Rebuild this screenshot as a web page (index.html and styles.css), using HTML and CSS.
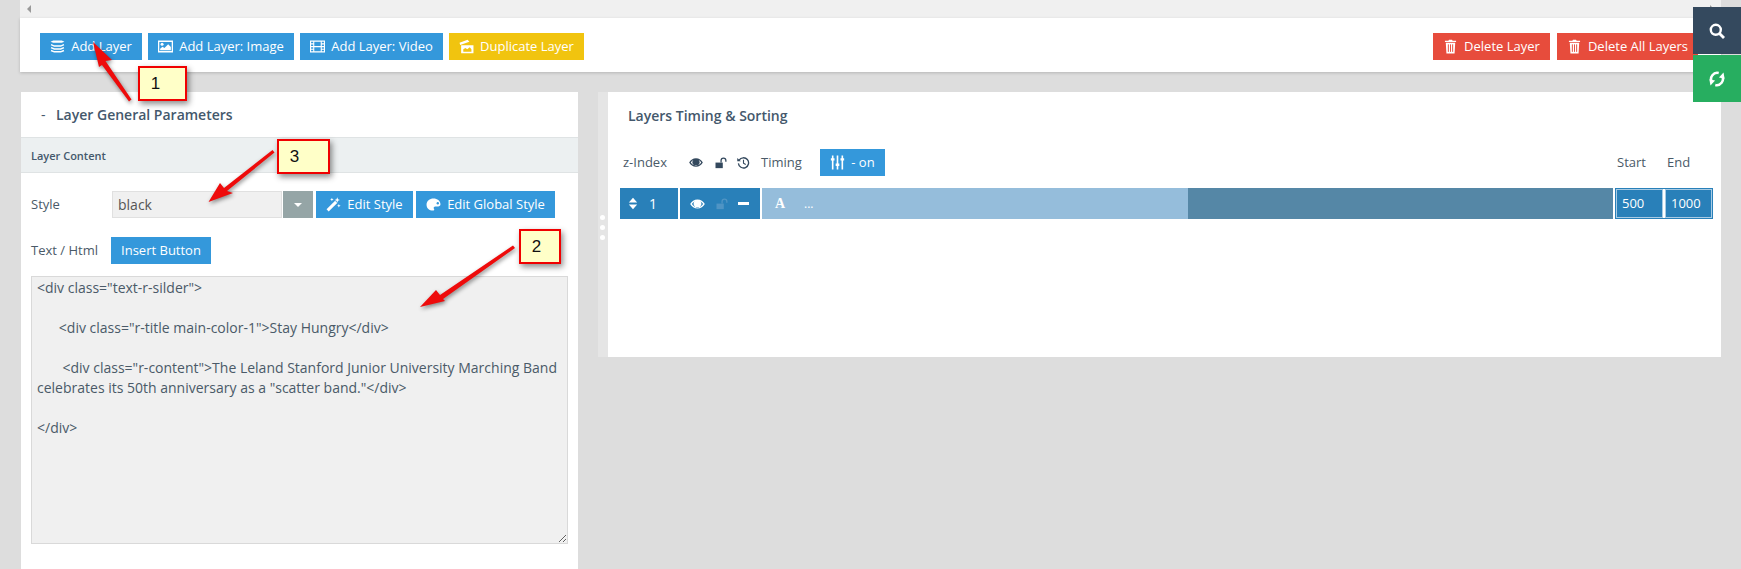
FILE: index.html
```html
<!DOCTYPE html>
<html lang="en">
<head>
<meta charset="utf-8">
<title>Layers</title>
<link rel="stylesheet" href="styles.css">
</head>
<body>
<svg class="defs" width="0" height="0" aria-hidden="true">
  <symbol id="i-layers" viewBox="0 0 14 14"><path d="M.5 2.500 3 1.500h8l2.500 1L11 3.600H3z" fill="currentColor"/><path d="M1 5.300 4 6.600h6l3-1.300M1 8 4 9.300h6l3-1.300M1 10.700 4 12h6l3-1.300" fill="none" stroke="currentColor" stroke-width="1.400"/></symbol>
  <symbol id="i-image" viewBox="0 0 14 14"><path fill-rule="evenodd" d="M0 1.500h14v11H0zM1.200 2.700v8.600h11.600V2.700z" fill="currentColor"/><circle cx="3.800" cy="5" r="1.400" fill="currentColor"/><path d="M2 10.500V9l2.200-1.700L6 8.500 9.500 5l2.500 2.500v3z" fill="currentColor"/></symbol>
  <symbol id="i-film" viewBox="0 0 14 14"><path fill-rule="evenodd" d="M0 1.500h14v11H0zM3 2.600H1V4h2zM3 5.200H1v1.300h2zM3 7.600H1V9h2zM3 10H1v1.400h2zM13 2.600h-2V4h2zM13 5.200h-2v1.300h2zM13 7.600h-2V9h2zM13 10h-2v1.400h2zM10 2.600H4v3.900h6zM10 7.600H4v3.800h6z" fill="currentColor"/></symbol>
  <symbol id="i-dup" viewBox="0 0 14 14"><path d="M.5 3.500 8 .8l1.700 1.800-8.600 3zM2 5.800h11.500v7.400H2z" fill="currentColor"/><path d="M4 12V9.500l2-1.200 1.700 1.200 2.300-1.700 1.600 1.700V12z" fill="#f1c40f"/></symbol>
  <symbol id="i-trash" viewBox="0 0 14 14"><path d="M5 1.600 5.600.6h2.800l.6 1H12.200v1.300H1.800V1.600zM2.600 3.500h8.800l-.6 10H3.200z" fill="currentColor"/><path d="M5 5v7M7 5v7M9 5v7" stroke="#e74c3c" stroke-width=".9"/></symbol>
  <symbol id="i-wand" viewBox="0 0 14 14"><path d="M.5 11.500 8.500 3.500l2 2-8 8z" fill="currentColor"/><path d="M10.500 .3l.7 1.800 1.800.7-1.800.7-.7 1.800-.7-1.800-1.800-.7 1.800-.7zM5.500 .6l.5 1.200 1.200.5-1.200.5-.5 1.200-.5-1.200-1.200-.5 1.200-.5zM12 6.500l.5 1.200 1.200.5-1.200.5-.5 1.200-.5-1.200-1.200-.5 1.200-.5z" fill="currentColor"/></symbol>
  <symbol id="i-palette" viewBox="0 0 14 14"><path d="M7 1.500C3.400 1.500.5 3.900.5 7.200s2.700 5.500 5.800 5.500c1.500 0 1.700-1 1.100-1.800-.7-1 .1-2.100 1.300-2.100h2.600c1.300 0 2.200-.8 2.200-2C13.500 3.700 10.500 1.500 7 1.500z" fill="currentColor"/><circle cx="11" cy="5.800" r="1.100" fill="#3498db"/></symbol>
  <symbol id="i-eye" viewBox="0 0 16 12"><path fill-rule="evenodd" d="M8 1.200C4.600 1.200 1.700 3.200.2 6c1.500 2.800 4.400 4.800 7.800 4.800s6.300-2 7.800-4.800C14.300 3.200 11.400 1.200 8 1.200zM2 6c.8-1.200 1.800-2.200 3-2.900A4 4 0 1 0 11 3.100c1.200.7 2.200 1.700 3 2.900-1.400 2.100-3.500 3.500-6 3.500S3.400 8.100 2 6z" fill="currentColor"/><circle cx="7" cy="4.800" r="1.200" fill="currentColor"/></symbol>
  <symbol id="i-lock" viewBox="0 0 14 14"><path d="M0 6.500h8.500V13H0z" fill="currentColor"/><path d="M6.500 6.500V4a2.800 2.800 0 0 1 5.600 0v1.500" fill="none" stroke="currentColor" stroke-width="1.500"/></symbol>
  <symbol id="i-history" viewBox="0 0 14 14"><path d="M2.300 4.500A5.500 5.500 0 1 1 1.500 8" fill="none" stroke="currentColor" stroke-width="1.400"/><path d="M.3 2.200 4.200 5.700H.3z" fill="currentColor"/><path d="M7 4v3.700l2.400 1.400" fill="none" stroke="currentColor" stroke-width="1.200"/></symbol>
  <symbol id="i-sliders" viewBox="0 0 14 14"><path d="M2.500 .5v13M7 .5v13M11.500 .5v13" stroke="currentColor" stroke-width="1.500"/><path d="M.8 3h3.400v2.200H.8zM5.300 8h3.400v2.200H5.300zM9.800 3h3.400v2.200H9.800z" fill="currentColor"/></symbol>
  <symbol id="i-sort" viewBox="0 0 10 14"><path d="M5 .8 9.500 5.800H.5zM5 13.200.5 8.200h9z" fill="currentColor"/></symbol>
  <symbol id="i-search" viewBox="0 0 16 16"><circle cx="6.800" cy="6.800" r="5" fill="none" stroke="currentColor" stroke-width="2.400"/><path d="M10.500 10.500 15 15" stroke="currentColor" stroke-width="2.800"/></symbol>
  <symbol id="i-refresh" viewBox="0 0 14 14"><path d="M8.500 1.800A5.400 5.400 0 0 0 2.400 9.500" fill="none" stroke="currentColor" stroke-width="2.200"/><path d="M.3 7.300 5.300 8.300 1.300 12.600z" fill="currentColor"/><path d="M5.500 12.200A5.400 5.400 0 0 0 11.600 4.500" fill="none" stroke="currentColor" stroke-width="2.200"/><path d="M13.700 6.700 8.700 5.700 12.700 1.400z" fill="currentColor"/></symbol>
</svg>

<div class="strip"><span class="tri tri-left"></span><span class="tri tri-right"></span></div>

<div class="toolbar">
  <button class="btn btn-blue w-add"><svg class="ic"><use href="#i-layers"/></svg>Add Layer</button>
  <button class="btn btn-blue w-img"><svg class="ic"><use href="#i-image"/></svg>Add Layer: Image</button>
  <button class="btn btn-blue w-vid"><svg class="ic"><use href="#i-film"/></svg>Add Layer: Video</button>
  <button class="btn btn-yellow w-dup"><svg class="ic"><use href="#i-dup"/></svg>Duplicate Layer</button>
  <span class="spacer"></span>
  <button class="btn btn-red w-del"><svg class="ic"><use href="#i-trash"/></svg>Delete Layer</button>
  <button class="btn btn-red w-delall"><svg class="ic"><use href="#i-trash"/></svg>Delete All Layers</button>
</div>

<div class="columns">
  <section class="panel-left">
    <h2 class="panel-head"><span class="dash">-</span>Layer General Parameters</h2>
    <div class="band">Layer Content</div>
    <div class="row-style">
      <label class="lbl lbl-style">Style</label>
      <div class="select">black</div>
      <div class="select-arrow"><span class="caret"></span></div>
      <button class="btn btn-blue w-edit"><svg class="ic"><use href="#i-wand"/></svg>Edit Style</button>
      <button class="btn btn-blue w-global"><svg class="ic"><use href="#i-palette"/></svg>Edit Global Style</button>
    </div>
    <div class="row-text">
      <label class="lbl lbl-text">Text / Html</label>
      <button class="btn btn-blue w-insert">Insert Button</button>
    </div>
    <textarea class="code" spellcheck="false">&lt;div class="text-r-silder"&gt;

      &lt;div class="r-title main-color-1"&gt;Stay Hungry&lt;/div&gt;

       &lt;div class="r-content"&gt;The Leland Stanford Junior University Marching Band celebrates its 50th anniversary as a "scatter band."&lt;/div&gt;

&lt;/div&gt;</textarea>
  </section>

  <div class="divider"><i></i><i></i><i></i></div>

  <section class="panel-right">
    <h2 class="right-title">Layers Timing &amp; Sorting</h2>
    <div class="tl-head">
      <span class="tl-z">z-Index</span>
      <svg class="tl-eye"><use href="#i-eye"/></svg>
      <svg class="tl-lock"><use href="#i-lock"/></svg>
      <svg class="tl-hist"><use href="#i-history"/></svg>
      <span class="tl-timing">Timing</span>
      <button class="btn btn-blue w-on"><svg class="ic"><use href="#i-sliders"/></svg>- on</button>
      <span class="spacer"></span>
      <span class="tl-start">Start</span>
      <span class="tl-end">End</span>
    </div>
    <div class="tl-row">
      <div class="cell cell-z"><svg class="sort"><use href="#i-sort"/></svg><span>1</span></div>
      <div class="cell cell-icons">
        <svg class="r-eye"><use href="#i-eye"/></svg>
        <svg class="r-lock"><use href="#i-lock"/></svg>
        <span class="r-minus"></span>
      </div>
      <div class="bar-light"><span class="serif-a">A</span><span class="dots">...</span></div>
      <div class="bar-dark"></div>
      <div class="times">
        <span class="time">500</span>
        <span class="time">1000</span>
      </div>
    </div>
  </section>
</div>

<div class="side">
  <div class="side-search"><svg class="side-ic"><use href="#i-search"/></svg></div>
  <div class="side-sync"><svg class="side-ic"><use href="#i-refresh"/></svg></div>
</div>

<svg class="arrows" width="1741" height="569" aria-hidden="true">
  <polygon points="93,42 112,60 105.500,61 131.500,99.500 129,101.500 102,65 99,67"/>
  <polygon points="208.500,202 220,183 224,188 272.500,150 274.500,152.500 227,191 233,193"/>
  <polygon points="420,307 436,290 440,295 513,245.500 515,248 443,299 445,301"/>
</svg>

<div class="note note-1">1</div>
<div class="note note-3">3</div>
<div class="note note-2">2</div>
</body>
</html>
```

FILE: styles.css
```css
* { box-sizing: border-box; }
html, body { margin: 0; height: 569px; overflow: hidden; }
body {
  position: relative;
  background: #dddddd;
  font-family: "Open Sans", "Noto Sans", sans-serif;
  font-size: 13px;
  color: #34495e;
}
.defs { position: absolute; }
.spacer { flex: 1; }

.strip {
  display: flex;
  justify-content: space-between;
  align-items: center;
  height: 18px;
  margin: 0 20px;
  padding: 0 7px;
  background: #f0f0f0;
}
.tri { width: 0; height: 0; border: 4px solid transparent; }
.tri-left { border-right-color: #999; border-left-width: 0; }
.tri-right { border-left-color: #999; border-right-width: 0; }

.toolbar {
  display: flex;
  align-items: flex-start;
  gap: 6px;
  height: 54px;
  margin: 0 20px;
  padding: 15px 23px 0 20px;
  background: #fff;
  box-shadow: 0 1px 3px rgba(0, 0, 0, .18);
}
.btn {
  display: inline-flex;
  align-items: center;
  justify-content: center;
  height: 27px;
  padding: 0;
  border: 0;
  font: 13px/27px "Open Sans", "Noto Sans", sans-serif;
  color: #fff;
  white-space: nowrap;
}
.ic { width: 15px; height: 15px; margin-right: 6px; flex: none; }
.btn-blue { background: #3498db; }
.btn-yellow { background: #f1c40f; }
.btn-red { background: #e74c3c; }
.w-add { width: 102px; }
.w-img { width: 146px; }
.w-vid { width: 143px; }
.w-dup { width: 135px; }
.w-del { width: 117px; margin-right: 1px; }
.w-delall { width: 141px; }

.columns { display: flex; margin: 20px 20px 0 21px; }

.panel-left { width: 557px; height: 477px; background: #fff; flex: none; }
.panel-head {
  display: flex;
  align-items: center;
  height: 45px;
  margin: 0;
  padding-left: 20px;
  font-size: 14px;
  font-weight: 600;
  color: #44586c;
}
.dash { width: 15px; font-weight: 400; }
.band {
  height: 36px;
  padding-left: 10px;
  line-height: 36px;
  background: #ecf0f1;
  border-top: 1px solid #dfe3e4;
  border-bottom: 1px solid #dfe3e4;
  font-size: 11px;
  font-weight: 600;
  color: #44586c;
}
.row-style {
  display: flex;
  align-items: center;
  height: 27px;
  margin-top: 18px;
  padding-left: 10px;
}
.lbl { padding-bottom: 2px; font-size: 13px; color: #4a5a68; }
.lbl-style { width: 81px; }
.select {
  width: 170px;
  height: 27px;
  padding-left: 5px;
  line-height: 25px;
  background: #f0f0f0;
  border: 1px solid #e0e0e0;
  font-size: 14px;
  color: #555;
}
.select-arrow {
  display: flex;
  align-items: center;
  justify-content: center;
  width: 30px;
  height: 27px;
  margin: 0 3px 0 1px;
  background: #95a5a6;
}
.caret {
  width: 0;
  height: 0;
  border: 4px solid transparent;
  border-top-color: #fff;
  border-bottom-width: 0;
}
.w-edit { width: 97px; margin-right: 3px; }
.w-global { width: 139px; }
.row-text {
  display: flex;
  align-items: center;
  height: 27px;
  margin-top: 19px;
  padding-left: 10px;
}
.lbl-text { width: 80px; }
.w-insert { width: 100px; }
.code {
  display: block;
  width: 537px;
  height: 268px;
  margin: 12px 0 0 10px;
  padding: 1px 5px;
  background: #f0f0f0;
  border: 1px solid #d9d9d9;
  border-radius: 0;
  font: 14px/20px "Open Sans", "Noto Sans", sans-serif;
  color: #4a5a68;
  outline: 0;
}

.divider {
  display: flex;
  flex-direction: column;
  align-items: center;
  justify-content: center;
  gap: 5px;
  width: 10px;
  height: 265px;
  margin-left: 20px;
  padding: 5px 2px 0 0;
  background: #e5e5e5;
  flex: none;
}
.divider i { width: 5px; height: 5px; border-radius: 50%; background: #fff; flex: none; }

.panel-right { flex: 1; height: 265px; padding: 0 8px 0 12px; background: #fff; }
.right-title {
  margin: 0;
  padding: 14px 0 0 8px;
  height: 57px;
  font-size: 14px;
  line-height: 20px;
  font-weight: 600;
  color: #44586c;
}
.tl-head { display: flex; align-items: center; height: 27px; font-size: 13px; color: #4a5a68; }
.tl-z { width: 66px; margin: 0 0 2px 3px; }
.tl-eye { width: 14px; height: 11px; color: #34495e; margin-right: 12px; }
.tl-lock { width: 13px; height: 12px; color: #34495e; margin-right: 9px; }
.tl-hist { width: 13px; height: 13px; color: #34495e; margin-right: 11px; }
.tl-timing { width: 59px; margin-bottom: 2px; }
.w-on { width: 65px; }
.tl-start { width: 50px; margin-bottom: 2px; }
.tl-end { width: 46px; margin-bottom: 2px; }

.tl-row { display: flex; height: 31px; margin-top: 12px; color: #fff; }
.cell { display: flex; align-items: center; height: 31px; background: #2980b9; }
.cell-z { width: 58px; padding-left: 8px; font-size: 14px; }
.sort { width: 10px; height: 13px; margin-right: 11px; }
.cell-icons { width: 80px; margin-left: 2px; padding-left: 10px; }
.r-eye { width: 15px; height: 12px; margin-right: 11px; }
.r-lock { width: 13px; height: 12px; color: #4f94c4; margin-right: 9px; }
.r-minus { width: 11px; height: 3px; background: #fff; }
.bar-light {
  display: flex;
  align-items: center;
  width: 426px;
  margin-left: 2px;
  padding-left: 13px;
  background: #95bddb;
}
.serif-a { width: 29px; font: 700 14px "Liberation Serif", serif; }
.dots { font-size: 12px; }
.bar-dark { width: 425px; background: #5587a6; }
.times { display: flex; gap: 2px; width: 98px; margin-left: 2px; border: 1px solid #2980b9; }
.time {
  width: 47px;
  height: 29px;
  padding-left: 5px;
  line-height: 27px;
  background: #2980b9;
  border: 1px solid #a8cbe4;
  font-size: 13px;
}

.side { position: absolute; top: 7px; right: 0; width: 48px; }
.side-search, .side-sync { display: flex; align-items: center; justify-content: center; color: #fff; }
.side-search { height: 47px; background: #34495e; margin-bottom: 1px; }
.side-sync { height: 47px; background: #27ae60; }
.side-ic { width: 16px; height: 16px; }

.arrows { position: absolute; top: 0; left: 0; pointer-events: none; }
.arrows polygon { fill: #ee0b0b; filter: drop-shadow(1px 2px 2px rgba(0, 0, 0, .45)); }

.note {
  position: absolute;
  display: flex;
  align-items: center;
  justify-content: center;
  background: #ffffc8;
  border: 2px solid #f00000;
  box-shadow: 2px 3px 6px rgba(0, 0, 0, .45);
  font: 17px "Liberation Sans", sans-serif;
  color: #111;
}
.note-1 { left: 138px; top: 66px; width: 49px; height: 35px; padding-right: 14px; }
.note-3 { left: 277px; top: 139px; width: 53px; height: 35px; padding-right: 18px; }
.note-2 { left: 519px; top: 229px; width: 42px; height: 35px; padding-right: 7px; }
```
